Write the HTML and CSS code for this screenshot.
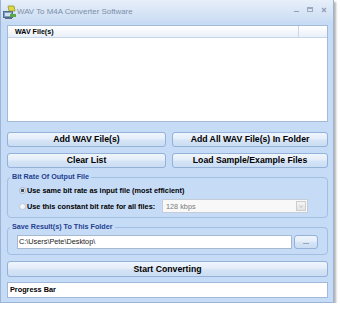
FILE: index.html
```html
<!DOCTYPE html>
<html lang="en">
<head>
  <meta charset="UTF-8">
  <meta name="viewport" content="width=device-width, initial-scale=1.0">
  <title>WAV To M4A Converter Software</title>
  <link rel="stylesheet" href="styles.css">
</head>

<body>
  <div class="window">
    <div class="titlebar">
      <svg class="app-icon" width="13" height="14" viewBox="0 0 13 14">
        <rect x="0.5" y="6.5" width="9" height="6" fill="#7e9cc0" stroke="#4d6b8f"/>
        <rect x="2" y="8" width="6" height="3" fill="#cfe0f0"/>
        <path d="M5 1 L11 1 L12 6 L6 6 Z" fill="#e3d34a" stroke="#8a9a2a" stroke-width="0.8"/>
        <rect x="7" y="9" width="6" height="3" fill="#5aa845"/>
        <rect x="2" y="12.5" width="7" height="1.5" fill="#5b6d80"/>
      </svg>
      <span class="title">WAV To M4A Converter Software</span>
      <svg class="controls" width="44" height="22" viewBox="0 0 44 22">
        <line x1="5" y1="11.5" x2="10" y2="11.5" stroke="#8e9fb6" stroke-width="1"/>
        <rect x="18.5" y="7.5" width="5" height="4" fill="none" stroke="#9aabc1" stroke-width="1"/>
        <line x1="18.5" y1="8.5" x2="23.5" y2="8.5" stroke="#9aabc1" stroke-width="1"/>
        <path d="M33 8 L37 12 M37 8 L33 12" stroke="#8e9fb6" stroke-width="1.2"/>
      </svg>
    </div>

    <div class="client">
      <div class="file-list">
        <div class="list-header">
          <span>WAV File(s)</span>
          <span></span>
        </div>
      </div>

      <div class="button-row">
        <button class="btn">Add WAV File(s)</button>
        <button class="btn">Add All WAV File(s) In Folder</button>
      </div>
      <div class="button-row">
        <button class="btn">Clear List</button>
        <button class="btn">Load Sample/Example Files</button>
      </div>

      <fieldset class="group">
        <legend>Bit Rate Of Output File</legend>
        <div class="bitrate-body">
          <div class="radio-row">
            <span class="radio checked"></span>
            <span>Use same bit rate as input file (most efficient)</span>
          </div>
          <div class="radio-row">
            <span class="radio"></span>
            <span>Use this constant bit rate for all files:</span>
            <div class="combo">
              <span>128 kbps</span>
              <span class="combo-arrow">
                <svg width="8" height="9" viewBox="0 0 8 9"><path d="M2.5 3.5 L4 5.5 L5.5 3.5" fill="none" stroke="#b5b5b5" stroke-width="0.8"/></svg>
              </span>
            </div>
          </div>
        </div>
      </fieldset>

      <fieldset class="group save">
        <legend>Save Result(s) To This Folder</legend>
        <div class="save-row">
          <div class="path-field">C:\Users\Pete\Desktop\</div>
          <button class="btn browse">...</button>
        </div>
      </fieldset>

      <button class="btn start">Start Converting</button>

      <div class="progress">Progress Bar</div>
    </div>
  </div>
</body>
</html>
```

FILE: styles.css
```css
body {
  margin: 0;
  padding: 0;
  background-color: #ffffff;
  font-family: "Liberation Sans", Arial, sans-serif;
  color: #000;
}

.window {
  width: 334px;
  height: 303px;
  box-sizing: border-box;
  border: 1px solid #9bb4d5;
  border-top: 0;
  background-color: #c5dbf6;
  box-shadow: 2px 2px 2px rgba(0,0,0,0.3);
  display: flex;
  flex-direction: column;
}

.titlebar {
  height: 22px;
  flex-shrink: 0;
  display: flex;
  align-items: center;
  padding-left: 2px;
  background: linear-gradient(#e7eff9, #d6e4f6 60%, #cadcf3);
}

.app-icon {
  margin-right: 1px;
  margin-top: 1px;
}

.title {
  font-size: 7.9px;
  color: #7d8ea6;
}

.controls {
  margin-left: auto;
}

.client {
  flex: 1;
  padding: 3px 5px 4px 6px;
  display: flex;
  flex-direction: column;
}

.file-list {
  height: 97px;
  box-sizing: border-box;
  border: 1px solid #a3bad7;
  background-color: #fff;
}

.list-header {
  display: grid;
  grid-template-columns: 1fr 29px;
  height: 11px;
  background: linear-gradient(#ffffff, #e9f0f9);
  border-bottom: 1px solid #c6d5e9;
  font-size: 7.1px;
  font-weight: bold;
  line-height: 12px;
}

.list-header span:first-child {
  padding-left: 7px;
}

.list-header span + span {
  border-left: 1px solid #c9d7e9;
}

.button-row {
  display: grid;
  grid-template-columns: 159px 1fr;
  gap: 6px;
  margin-top: 10px;
}

.button-row + .button-row {
  margin-top: 6px;
}

.btn {
  height: 15px;
  padding: 0;
  box-sizing: border-box;
  border: 1px solid #94b1d7;
  border-radius: 3px;
  background: linear-gradient(#eff5fc, #e4edf9 45%, #d5e4f6 55%, #cbddf3);
  font-family: "Liberation Sans", Arial, sans-serif;
  font-size: 8.7px;
  font-weight: bold;
  line-height: 13px;
  color: #000;
}

.group {
  margin: 4px 0 0;
  padding: 0 0 0 2px;
  min-width: 0;
  border: 1px solid #a2bee3;
  border-radius: 4px;
}

.group legend {
  padding: 0 2px;
  font-size: 7.2px;
  font-weight: bold;
  line-height: 10px;
  color: #1f4190;
}

.bitrate-body {
  padding: 0 19px 4px 9px;
}

.radio-row {
  display: flex;
  align-items: center;
  height: 12px;
  margin-top: 2px;
  font-size: 7.3px;
  font-weight: bold;
}

.radio-row + .radio-row {
  height: 14px;
  margin-top: 3px;
}

.radio {
  width: 7px;
  height: 7px;
  box-sizing: border-box;
  border-radius: 50%;
  border: 1px solid #bcc7d5;
  background: #f3f6fa;
  margin-right: 1px;
}

.radio.checked {
  border-color: #a8b4c4;
  background: radial-gradient(circle, #454e5b 0, #454e5b 1.4px, #e6ebf2 2px);
}

.combo {
  margin-left: auto;
  width: 146px;
  height: 14px;
  box-sizing: border-box;
  border: 1px solid #c4ccd7;
  background-color: #f8f8f8;
  display: flex;
  align-items: center;
  padding-left: 3px;
  font-weight: normal;
  color: #7b7b7b;
}

.combo-arrow {
  margin-left: auto;
  margin-right: 1px;
  width: 10px;
  height: 10px;
  box-sizing: border-box;
  border: 1px solid #cdcdcd;
  background: linear-gradient(#f4f4f4, #e4e4e4);
  display: flex;
  align-items: center;
  justify-content: center;
}

.save-row {
  display: flex;
  margin-top: 3px;
  padding: 0 9px 5px 7px;
}

.path-field {
  flex: 1;
  height: 14px;
  box-sizing: border-box;
  border: 1px solid #a6b9d0;
  background-color: #fff;
  padding-left: 1px;
  font-size: 7.3px;
  line-height: 12px;
  color: #1a1a1a;
}

.browse {
  width: 24px;
  height: 14px;
  margin-left: 2px;
  font-size: 7px;
  font-weight: normal;
  line-height: 10px;
}

.start {
  width: 100%;
  height: 16px;
  margin-top: 6px;
  line-height: 14px;
}

.progress {
  height: 16px;
  box-sizing: border-box;
  margin-top: 5px;
  border: 1px solid #a1badb;
  background-color: #fff;
  padding-left: 2px;
  font-size: 7.3px;
  font-weight: bold;
  line-height: 14px;
}
```
